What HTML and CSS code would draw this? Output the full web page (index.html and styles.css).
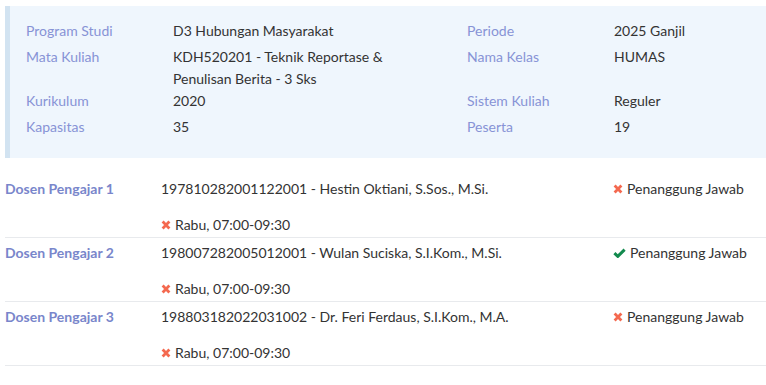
FILE: index.html
```html
<!DOCTYPE html>
<html lang="id">
  <head>
    <meta charset="UTF-8" />
    <meta name="viewport" content="width=device-width, initial-scale=1.0" />
    <title>Detail Kelas</title>
    <link rel="stylesheet" href="styles.css">
  </head>
  <body>
    <div class="info-panel">
      <div class="info-grid">
        <div class="info-label">Program Studi</div>
        <div class="info-value">D3 Hubungan Masyarakat</div>
        <div class="info-label">Periode</div>
        <div class="info-value">2025 Ganjil</div>

        <div class="info-label">Mata Kuliah</div>
        <div class="info-value">KDH520201 - Teknik Reportase &amp; Penulisan Berita - 3 Sks</div>
        <div class="info-label">Nama Kelas</div>
        <div class="info-value">HUMAS</div>

        <div class="info-label">Kurikulum</div>
        <div class="info-value">2020</div>
        <div class="info-label">Sistem Kuliah</div>
        <div class="info-value">Reguler</div>

        <div class="info-label">Kapasitas</div>
        <div class="info-value">35</div>
        <div class="info-label">Peserta</div>
        <div class="info-value">19</div>
      </div>
    </div>

    <div class="dosen-list">
      <div class="dosen-row">
        <div class="dosen-label">Dosen Pengajar 1</div>
        <div class="dosen-detail">
          <div>197810282001122001 - Hestin Oktiani, S.Sos., M.Si.</div>
          <div class="jadwal">
            <svg class="icon icon-no" viewBox="0 0 10 10"><path d="M1.6 1.6 8.4 8.4M8.4 1.6 1.6 8.4" /></svg>Rabu, 07:00-09:30
          </div>
        </div>
        <div class="dosen-status">
          <svg class="icon icon-no" viewBox="0 0 10 10"><path d="M1.6 1.6 8.4 8.4M8.4 1.6 1.6 8.4" /></svg>Penanggung Jawab
        </div>
      </div>

      <div class="dosen-row">
        <div class="dosen-label">Dosen Pengajar 2</div>
        <div class="dosen-detail">
          <div>198007282005012001 - Wulan Suciska, S.I.Kom., M.Si.</div>
          <div class="jadwal">
            <svg class="icon icon-no" viewBox="0 0 10 10"><path d="M1.6 1.6 8.4 8.4M8.4 1.6 1.6 8.4" /></svg>Rabu, 07:00-09:30
          </div>
        </div>
        <div class="dosen-status">
          <svg class="icon icon-yes" viewBox="0 0 13 10"><path d="M1.4 5.2 4.8 8.4 11.6 1.6" /></svg>Penanggung Jawab
        </div>
      </div>

      <div class="dosen-row">
        <div class="dosen-label">Dosen Pengajar 3</div>
        <div class="dosen-detail">
          <div>198803182022031002 - Dr. Feri Ferdaus, S.I.Kom., M.A.</div>
          <div class="jadwal">
            <svg class="icon icon-no" viewBox="0 0 10 10"><path d="M1.6 1.6 8.4 8.4M8.4 1.6 1.6 8.4" /></svg>Rabu, 07:00-09:30
          </div>
        </div>
        <div class="dosen-status">
          <svg class="icon icon-no" viewBox="0 0 10 10"><path d="M1.6 1.6 8.4 8.4M8.4 1.6 1.6 8.4" /></svg>Penanggung Jawab
        </div>
      </div>
    </div>
  </body>
</html>
```

FILE: styles.css
```css
body {
  font-family: "Lato", "Open Sans", sans-serif;
  font-size: 14px;
  line-height: 22px;
  margin: 0;
  padding: 6px 0 0 5px;
  color: #333;
  background-color: white;
}

.info-panel {
  background-color: #eff6fd;
  border-left: 5px solid #d2e3f1;
  padding: 14px 0 16px 16px;
}

.info-grid {
  display: grid;
  grid-template-columns: 147px 294px 147px 1fr;
  grid-auto-rows: minmax(26px, auto);
  align-items: start;
}

.info-label {
  color: #8793d6;
}

.info-value {
  padding-right: 60px;
}

.dosen-list {
  margin-top: 16px;
}

.dosen-row {
  display: grid;
  grid-template-columns: 156px 452px 1fr;
  padding: 4px 0 1px;
  border-bottom: 1px solid #e8eaed;
}

.dosen-label {
  font-weight: bold;
  color: #7986cb;
}

.jadwal {
  margin-top: 14px;
}

.icon {
  display: inline-block;
  fill: none;
  margin-right: 4px;
}

.icon-no {
  width: 10px;
  height: 10px;
  stroke: #f4694f;
  stroke-width: 2.8;
}

.icon-yes {
  width: 13px;
  height: 10px;
  stroke: #138a4e;
  stroke-width: 3;
}
```
